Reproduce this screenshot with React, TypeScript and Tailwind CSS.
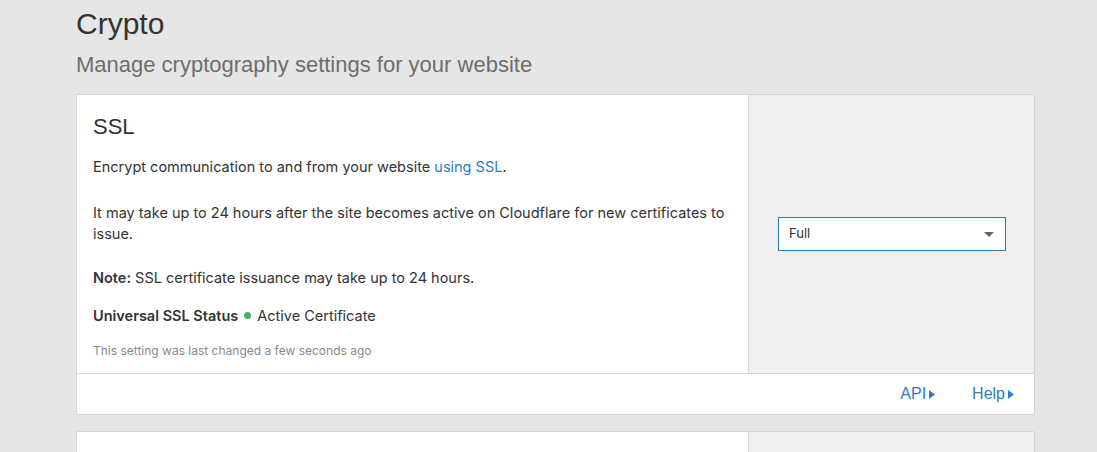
import React from 'react';

const font = { fontFamily: '"Liberation Sans", Arial, sans-serif' };
const body = { fontFamily: 'Inter, "Liberation Sans", Arial, sans-serif' };

function Caret() {
  return (
    <svg width="6" height="9" viewBox="0 0 6 9" className="inline-block ml-[3px]">
      <path d="M0 0 L6 4.5 L0 9 Z" fill="currentColor" />
    </svg>
  );
}

export default function App() {
  return (
    <div className="min-h-[452px] bg-[#e6e6e6] text-[#333]" style={font}>
      <div className="w-[959px] ml-[76px] pt-[6px]">
        <h1 className="text-[30px] leading-[36px] text-[#333]">Crypto</h1>
        <p className="text-[22px] leading-[26px] text-[#6e6e6e] mt-[10px]">
          Manage cryptography settings for your website
        </p>

        <div className="mt-[16px] bg-white border border-[#d5d5d5] rounded-[2px]">
          <div className="flex">
            <div className="w-[671px] px-[16px] pt-[18px] pb-[14px]" style={body}>
              <h2 className="text-[22px] leading-[28px] text-[#333]" style={font}>SSL</h2>
              <p className="text-[14.5px] leading-[21px] mt-[15px]">
                Encrypt communication to and from your website{' '}
                <span className="text-[#2f7bbf]">using SSL</span>.
              </p>
              <p className="text-[14.5px] leading-[21px] mt-[25px]">
                It may take up to 24 hours after the site becomes active on Cloudflare for new certificates to issue.
              </p>
              <p className="text-[14.5px] leading-[21px] mt-[23px]">
                <span className="font-semibold">Note:</span> SSL certificate issuance may take up to 24 hours.
              </p>
              <p className="text-[14.5px] leading-[21px] mt-[17px] flex items-center">
                <span className="font-semibold">Universal SSL Status</span>
                <span className="w-[7px] h-[7px] rounded-full bg-[#4cae6f] mx-[6px]" />
                <span>Active Certificate</span>
              </p>
              <p className="text-[12px] leading-[16px] text-[#8a8a8a] mt-[17px]">
                This setting was last changed a few seconds ago
              </p>
            </div>
            <div className="flex-1 bg-[#efefef] border-l border-[#d5d5d5] flex items-center pl-[29px]">
              <div className="w-[228px] h-[34px] bg-white border border-[#2f7bbf] flex items-center justify-between px-[10px]" style={body}>
                <span className="text-[13px] text-[#333]">Full</span>
                <svg width="10" height="5" viewBox="0 0 10 5" className="mr-[1px]">
                  <path d="M0 0 L10 0 L5 5 Z" fill="#666" />
                </svg>
              </div>
            </div>
          </div>
          <div className="border-t border-[#d5d5d5] h-[41px] flex items-center justify-end pr-[20px] gap-[37px] text-[16px] text-[#2f7bbf]">
            <span className="flex items-center">API<Caret /></span>
            <span className="flex items-center">Help<Caret /></span>
          </div>
        </div>

        <div className="mt-[16px] bg-white border border-[#d5d5d5] rounded-[2px] h-[40px] flex">
          <div className="w-[671px]" />
          <div className="flex-1 bg-[#efefef] border-l border-[#d5d5d5]" />
        </div>
      </div>
    </div>
  );
}
